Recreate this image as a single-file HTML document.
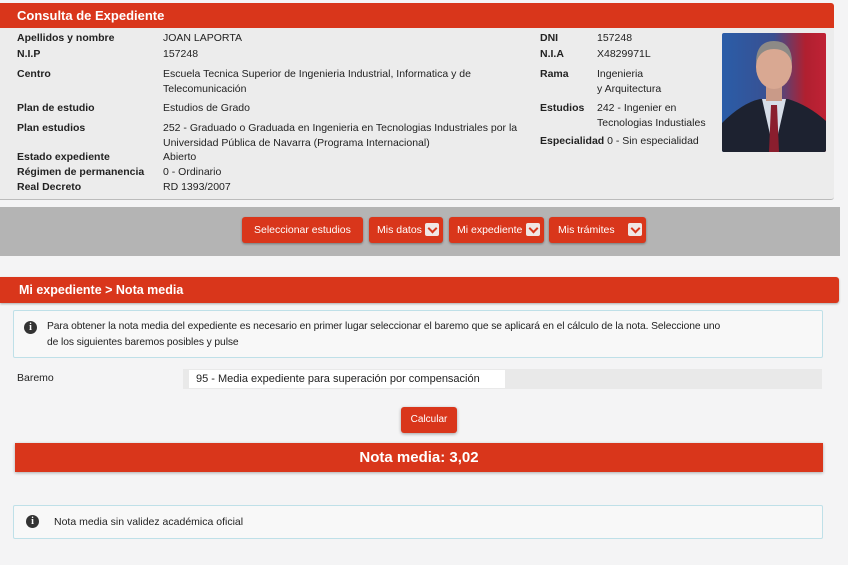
<!DOCTYPE html>
<html><head><meta charset="utf-8"><style>
*{box-sizing:border-box;margin:0;padding:0}
body{width:848px;height:565px;background:#f4f4f5;font-family:"Liberation Sans",sans-serif;font-size:10.5px;color:#222;position:relative;overflow:hidden}
.a{position:absolute;white-space:nowrap;line-height:14.5px}
.b{font-weight:bold}
.red{background:#d9361b;color:#fff}
.btn{position:absolute;top:217px;height:26px;background:#d9361b;color:#fff;border-radius:3px;box-shadow:0 1px 2px rgba(0,0,0,.35);font-size:10.5px;line-height:26px;padding-left:12px}
.chev{position:absolute;right:4px;top:6px;width:14px;height:13px;background:#f0e6e4;border-radius:2px}
.chev:after{content:"";position:absolute;left:4px;top:2px;width:5px;height:5px;border-right:2px solid #d9361b;border-bottom:2px solid #d9361b;transform:rotate(45deg)}
.info{position:absolute;left:13px;width:810px;border:1px solid #bfe0e8;background:#f8f8f8;border-radius:2px}
.ic{position:absolute;width:13px;height:13px;border-radius:50%;background:#333;color:#fff;font:bold 10px "Liberation Serif",serif;text-align:center;line-height:13px}
</style></head><body>
<div class="a" style="left:0;top:3px;width:834px;height:197px;background:#ececec;border-bottom:1px solid #bbb;border-radius:0 3px 3px 0"></div>
<div class="a red b" style="left:0;top:3px;width:834px;height:25px;font-size:13px;line-height:25px;padding-left:17px;border-radius:0 3px 0 0">Consulta de Expediente</div>
<div class="a b" style="left:17px;top:31px">Apellidos y nombre</div><div class="a" style="left:163px;top:31px">JOAN LAPORTA</div>
<div class="a b" style="left:17px;top:47px">N.I.P</div><div class="a" style="left:163px;top:47px">157248</div>
<div class="a b" style="left:17px;top:67px">Centro</div><div class="a" style="left:163px;top:67px">Escuela Tecnica Superior de Ingenieria Industrial, Informatica y de<br>Telecomunicación</div>
<div class="a b" style="left:17px;top:101px">Plan de estudio</div><div class="a" style="left:163px;top:101px">Estudios de Grado</div>
<div class="a b" style="left:17px;top:121px">Plan estudios</div><div class="a" style="left:163px;top:121px">252 - Graduado o Graduada en Ingenieria en Tecnologias Industriales por la<br>Universidad Pública de Navarra (Programa Internacional)</div>
<div class="a b" style="left:17px;top:150px">Estado expediente</div><div class="a" style="left:163px;top:150px">Abierto</div>
<div class="a b" style="left:17px;top:165px">Régimen de permanencia</div><div class="a" style="left:163px;top:165px">0 - Ordinario</div>
<div class="a b" style="left:17px;top:180px">Real Decreto</div><div class="a" style="left:163px;top:180px">RD 1393/2007</div>
<div class="a b" style="left:540px;top:31px">DNI</div><div class="a" style="left:597px;top:31px">157248</div>
<div class="a b" style="left:540px;top:47px">N.I.A</div><div class="a" style="left:597px;top:47px">X4829971L</div>
<div class="a b" style="left:540px;top:67px">Rama</div><div class="a" style="left:597px;top:67px">Ingenieria<br>y Arquitectura</div>
<div class="a b" style="left:540px;top:101px">Estudios</div><div class="a" style="left:597px;top:101px">242 - Ingenier en<br>Tecnologias Industiales</div>
<div class="a" style="left:540px;top:134px"><b>Especialidad</b> 0 - Sin especialidad</div>
<div class="a" style="left:722px;top:33px;width:104px;height:119px;border-radius:2px;overflow:hidden;background:linear-gradient(90deg,#2a5da8 0%,#3a4f90 50%,#b02030 80%,#c02235 100%)">
<svg width="104" height="119" viewBox="0 0 104 119"><path d="M0 119 L0 90 Q20 70 38 66 L66 66 Q86 72 104 88 L104 119Z" fill="#1d2230"/><path d="M40 66 L52 119 L64 66Z" fill="#d6dde8"/><path d="M49 72 L55 72 L57 119 L47 119Z" fill="#8a1e2e"/><rect x="44" y="52" width="16" height="16" fill="#c99a88"/><ellipse cx="52" cy="34" rx="18" ry="22" fill="#d9a892"/><path d="M34 30 Q34 8 52 8 Q70 8 70 30 Q66 16 52 16 Q38 16 34 30Z" fill="#8d8a86"/></svg></div>
<div class="a" style="left:0;top:207px;width:840px;height:49px;background:#b4b4b4"></div>
<div class="btn" style="left:242px;width:121px">Seleccionar estudios</div>
<div class="btn" style="left:369px;width:74px;padding-left:8px">Mis datos<span class="chev"></span></div>
<div class="btn" style="left:449px;width:95px;padding-left:8px">Mi expediente<span class="chev"></span></div>
<div class="btn" style="left:549px;width:97px;padding-left:9px">Mis trámites<span class="chev"></span></div>
<div class="a red b" style="left:0;top:277px;width:839px;height:26px;font-size:12.5px;line-height:26px;padding-left:19px;box-shadow:0 1px 2px rgba(0,0,0,.3);border-radius:0 3px 3px 0">Mi expediente &gt; Nota media</div>
<div class="info" style="top:310px;height:48px"><span class="ic" style="left:10px;top:10px">i</span><div class="a" style="left:33px;top:8px;font-size:10.3px;line-height:16px;letter-spacing:-0.1px">Para obtener la nota media del expediente es necesario en primer lugar seleccionar el baremo que se aplicará en el cálculo de la nota. Seleccione uno<br>de los siguientes baremos posibles y pulse</div></div>
<div class="a" style="left:17px;top:371px;font-size:10.5px">Baremo</div>
<div class="a" style="left:183px;top:369px;width:639px;height:20px;background:#e9e9e9"></div>
<div class="a" style="left:189px;top:370px;width:316px;height:18px;background:#fff;font-size:11px;line-height:18px;padding-left:7px">95 - Media expediente para superación por compensación</div>
<div class="a red" style="left:401px;top:407px;width:56px;height:26px;border-radius:3px;box-shadow:0 1px 3px rgba(0,0,0,.35);font-size:10px;line-height:26px;text-align:center">Calcular</div>
<div class="a red b" style="left:15px;top:443px;width:808px;height:29px;font-size:15px;line-height:29px;text-align:center;box-shadow:0 1px 3px rgba(0,0,0,.3)">Nota media: 3,02</div>
<div class="info" style="top:505px;height:34px"><span class="ic" style="left:12px;top:9px">i</span><div class="a" style="left:40px;top:9px;font-size:10.5px">Nota media sin validez académica oficial</div></div>
</body></html>
